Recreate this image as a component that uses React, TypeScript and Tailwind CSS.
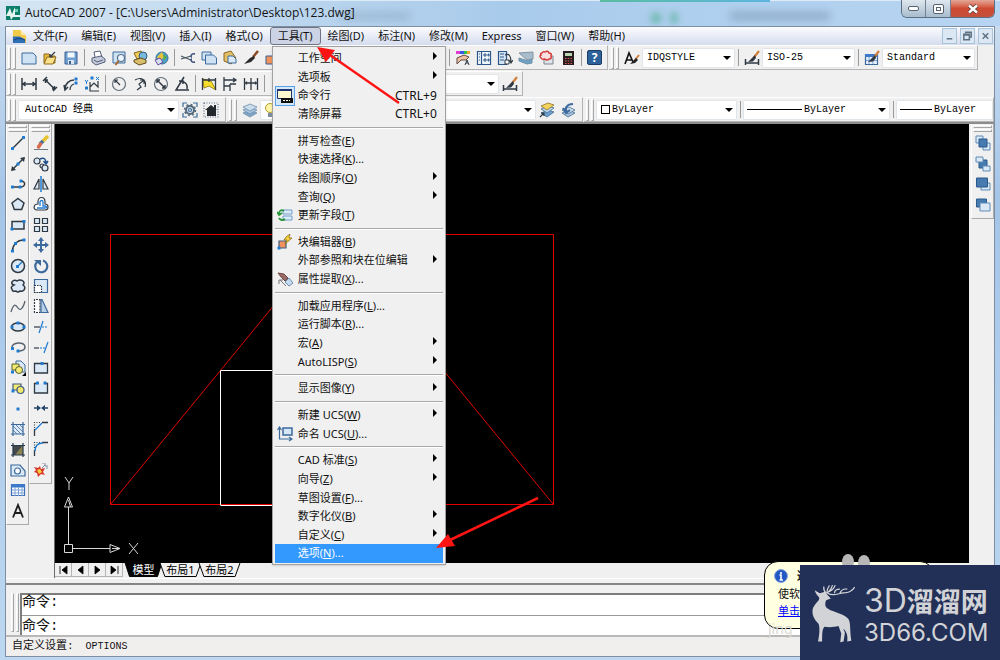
import React from 'react';

const ink = '#2f3943';
const blue = '#1f7bd0';
const steel = '#3d6a9c';
const pale = '#dbe8f5';

type Tool = { name: string; art: React.ReactNode };

const Dot = ({ x, y }: { x: number; y: number }) => (
  <rect x={x - 1.5} y={y - 1.5} width="3" height="3" rx="0.5" fill={blue} stroke="none" />
);

function Icon({ children, className = 'h-4 w-4' }: { children: React.ReactNode; className?: string }) {
  return (
    <svg viewBox="0 0 16 16" className={className} fill="none" stroke={ink} strokeWidth="1.2" aria-hidden="true">
      {children}
    </svg>
  );
}

const brush = (
  <>
    <path d="M15 1 9.500 8" stroke="#d0803a" strokeWidth="2.2" />
    <path d="M11 5 4 12l5-.5L12 8z" fill={ink} stroke="none" />
  </>
);

const fileTools: Tool[] = [
  { name: '新建', art: <path d="M1 3h11l3 3v8H1z" fill="#cfe2f4" stroke={steel} strokeWidth="1" /> },
  {
    name: '打开',
    art: (
      <>
        <path d="M2 13V4h5l1 2h5v7z" fill="#e9b83c" stroke="#8b6a1d" strokeWidth="1" />
        <path d="M2 14 5 7h9l-3 7z" fill="#fbe08a" stroke="#8b6a1d" strokeWidth="1" />
        <path d="m13 2-5 5m0-3v3h3" stroke={ink} strokeWidth="1.2" />
      </>
    ),
  },
  {
    name: '保存',
    art: (
      <>
        <path d="M2 2h12v12H2z" fill="#6e9fd2" stroke="#3a5f8f" strokeWidth="1" />
        <path d="M4.500 2.500h7v5h-7z" fill="#f4f8fc" stroke="none" />
        <path d="M5 10h6v4H5z" fill="#dbe6f2" stroke="none" />
        <path d="M6 11h2v3H6z" fill="#3a5f8f" stroke="none" />
      </>
    ),
  },
];

const printTools: Tool[] = [
  {
    name: '打印',
    art: (
      <>
        <path d="m5 7-1-5 6-1 2 6" fill="#fff" stroke="#55617a" strokeWidth="1" />
        <path d="m2 8 9-2 4 3v3l-9 3-4-3z" fill="#c3cada" stroke="#55617a" strokeWidth="1" />
        <path d="m4 10 3 2 6-2" stroke="#55617a" strokeWidth="1" />
      </>
    ),
  },
  {
    name: '打印预览',
    art: (
      <>
        <path d="M2 2h12v11H2z" fill="#cfe2f4" stroke={steel} strokeWidth="1" />
        <circle cx="10" cy="8" r="3.500" fill="#eef6fd" stroke="#56708c" />
        <path d="m7.500 11-3 4" stroke="#a86532" strokeWidth="2" />
      </>
    ),
  },
  {
    name: '发布',
    art: (
      <>
        <path d="m2 3 7-2 3 6-7 2z" fill="#f3ce55" stroke="#80631c" strokeWidth="1" />
        <circle cx="11" cy="6" r="4" fill="#7ab8dc" stroke="#315a82" strokeWidth="1" />
        <path d="m2 10 7-2 5 2v3l-7 2-5-3z" fill="#d9bd6b" stroke="#5e4c22" strokeWidth="1" />
      </>
    ),
  },
  {
    name: '三维 DWF',
    art: (
      <>
        <circle cx="9" cy="8" r="6" fill="#4aa3c9" stroke="#3b6c94" strokeWidth="1" />
        <path d="m9 2 2 5-4 4-3-4z" fill="#e8c33d" stroke="none" />
        <path d="m10 4 4 3-3 4z" fill="#58a84a" stroke="none" />
        <path d="m2 10 5-2 3 4-5 3z" fill="#d4def0" stroke="#6c4b9a" strokeWidth="1" />
      </>
    ),
  },
];

const clipTools: Tool[] = [
  {
    name: '剪切',
    art: (
      <>
        <path d="m1 6 10 4M1 9l10-3" stroke="#4c5660" />
        <path d="M15 4c-4-1-5 3-3 3M15 12c-4 1-5-3-3-3" stroke="#36507c" strokeWidth="1.500" />
      </>
    ),
  },
  {
    name: '复制',
    art: (
      <>
        <path d="M1 2h9v8H1z" fill="#cfe2f4" stroke={steel} strokeWidth="1" />
        <path d="M4.500 5h8l3 3v6h-11z" fill="#cfe2f4" stroke={steel} strokeWidth="1" />
      </>
    ),
  },
  {
    name: '粘贴',
    art: (
      <>
        <path d="m2 3 7-2 5 7-5 6-7-3z" fill="#e6bf62" stroke="#86682a" strokeWidth="1" />
        <path d="M6 6h5l3 3v4H6z" fill="#dbe8f5" stroke={steel} strokeWidth="1" />
      </>
    ),
  },
  {
    name: '特性匹配',
    art: (
      <>
        <path d="m15 1-5 6" stroke="#8c4a25" strokeWidth="2.500" />
        <path d="m11 6-4 2-6 6 7-2 4-4z" fill="#2b2b2b" stroke="none" />
      </>
    ),
  },
  {
    name: '块编辑器',
    art: <path d="M2 6h8v8H2z" fill="#f0935c" stroke="#3a5f8f" strokeWidth="1" />,
  },
];

const paletteTools: Tool[] = [
  {
    name: '特性',
    art: (
      <>
        <path d="M1 1h4v3H1z" fill="#e33ad0" stroke="none" />
        <path d="M5 1h4v3H5z" fill="#3b57e6" stroke="none" />
        <path d="M9 1h3v3H9z" fill="#2fc14c" stroke="none" />
        <path d="M12 1h3v3h-3z" fill="#f0a92b" stroke="none" />
        <path d="m2 8 7-3 5 2-3 3H6l-4 4z" fill="#efc1a0" stroke="#5d4a42" strokeWidth="1" />
        <path d="m10 15 2-5 2 5m-3-2h2" strokeWidth="1" />
      </>
    ),
  },
  {
    name: '设计中心',
    art: (
      <>
        <path d="M1.500 1.500h13v13h-13z" fill="#f2f7fc" stroke="#2d5689" />
        <path d="M5.500 2v12" stroke="#2d5689" />
        <path d="M3 4h1M3 7h1M3 10h1M8 4h2v2H8zM12 4h1v2h-1zM8 9h2v2H8zM12 9h1v2h-1z" stroke="#2d5689" strokeWidth="1" />
      </>
    ),
  },
  {
    name: '工具选项板',
    art: (
      <>
        <path d="M1.500 1.500h8v13h-8z" fill="#d4e3f3" stroke="#2d5689" />
        <path d="M3 4h4M3 7h4M3 10h4" stroke="#2d5689" />
        <path d="M8 5c4-2 6 1 6 7m-2-2 2 3 2-3" />
        <path d="M8 10h4v4H8z" fill="#fff" strokeWidth="1" />
      </>
    ),
  },
  {
    name: '图纸集',
    art: (
      <>
        <path d="m1 3 14-1v7l-6 1z" fill="#a9bccb" stroke="#8194a4" strokeWidth="1" />
        <path d="m1 8 9 3 4-2v4l-5 1-8-3z" fill="#6ca3c9" stroke="#7190a6" strokeWidth="1" />
      </>
    ),
  },
  {
    name: '标记集',
    art: (
      <>
        <path d="M5 6h9v8H5z" fill="#dfe4ea" stroke="#7c858f" strokeWidth="1" />
        <path
          d="M3 3q1-2 3-1 3-2 4 1 3 0 2 3 1 3-2 3-2 2-4 0-3 1-4-1-2-2 0-3-1-2 1-2z"
          fill="#fbe1e1"
          stroke="#d43a3a"
          strokeWidth="1.500"
        />
      </>
    ),
  },
  {
    name: '快速计算器',
    art: (
      <>
        <path d="M3 1h11v14H3z" fill="#2a1d20" stroke="none" />
        <path d="M5 3h7v3H5z" fill="#b8d8b4" stroke="none" />
        <path d="M5 8.500h7M5 11h7M5 13.500h7" stroke="#d65a5a" strokeDasharray="1.500 1.250" />
      </>
    ),
  },
];

const dimTools: Tool[] = [
  { name: '线性标注', art: <path d="M1 2v12M15 2v12M2 8h12M4.500 6 2 8l2.500 2M11.500 6 14 8l-2.500 2" strokeWidth="1.500" /> },
  { name: '对齐标注', art: <path d="m1 5 4-4M11 15l4-4M3.500 4l9 9M3.500 7V4H6M12.500 10v3H10" strokeWidth="1.500" /> },
  {
    name: '弧长标注',
    art: (
      <>
        <path d="M2 13c0-5 4-9 9-9M1 9l1 5 3-3" strokeWidth="1.500" />
        <path d="M7 14c0-3 1-5 4-6" />
        <Dot x={13} y={3} />
        <Dot x={13} y={7} />
      </>
    ),
  },
  {
    name: '坐标标注',
    art: (
      <>
        <path d="M6 6v9h9M6 11l4-4 4 4V5" />
        <path d="m1 4 1.500 2L4 4M2.500 6v2M12 1l3 3m0-3-3 3" stroke={blue} strokeWidth="1" />
        <Dot x={2.5} y={12} />
        <Dot x={8} y={2} />
      </>
    ),
  },
];

const radiusTools: Tool[] = [
  {
    name: '半径标注',
    art: (
      <>
        <circle cx="8" cy="8" r="6.500" stroke="#66707a" />
        <path d="M9 9 4 4m0 3V4h3" />
      </>
    ),
  },
  { name: '折弯标注', art: <path d="M3 4c7-4 12 1 10 7M5 14l4-3-2-3 5-4M8 4h4v4" /> },
  {
    name: '直径标注',
    art: (
      <>
        <circle cx="8" cy="8" r="6.500" stroke="#66707a" />
        <path d="m4 4 8 8M4 7V4h3M12 9v3H9" strokeWidth="1.500" />
      </>
    ),
  },
  { name: '角度标注', art: <path d="M10 1 2 14h13M7 5c5 1 7 4 6 8M5 5h4v3" strokeWidth="1.500" /> },
];

const quickDimTools: Tool[] = [
  {
    name: '快速标注',
    art: (
      <>
        <path d="m2 3 8 2 5 9-7-4-5 2z" fill="#f5de2c" stroke="#a48d17" strokeWidth="1" />
        <path d="M1.500 2v12M14.500 2v12M8 2v4M2 4h12" strokeWidth="1.300" />
      </>
    ),
  },
  { name: '基线标注', art: <path d="M2 1v14M2 4h12m-3-2 3 2-3 2M2 10h6M8 8v7M14 8H8" strokeWidth="1.300" /> },
  { name: '连续标注', art: <path d="M1.500 2v12M8 2v12M14.500 2v12M2 7h12M3.500 5.500v3M12.500 5.500v3" strokeWidth="1.300" /> },
];

const dimStyleArt = (
  <>
    <path d="M1.500 9v6M14.500 9v6M2 13h12" strokeWidth="1.500" />
    {brush}
  </>
);

const gearArt = (
  <>
    <path d="M1 5V1h4M11 1h4v4M15 11v4h-4M5 15H1v-4" stroke="#3c6c99" />
    <circle cx="8" cy="8" r="4" fill="#dbe4ec" stroke="#526778" strokeWidth="2" />
    <circle cx="8" cy="8" r="5.500" stroke="#526778" strokeWidth="1.500" strokeDasharray="2 2.300" />
    <circle cx="8" cy="8" r="1.500" stroke="#3c6c99" />
  </>
);

const homeArt = (
  <>
    <path d="M1 1h14v14H1z" stroke="#5c7183" strokeDasharray="1 1.500" />
    <path d="m8 3-6 5h2v6h9V8h1z" fill="#23282d" stroke="none" />
    <path d="M11 3h2v4h-2z" fill="#23282d" stroke="none" />
  </>
);

const layersArt = (
  <>
    <path d="m1 11 7-3 7 3-7 4z" fill="#7fa6c9" stroke="#6f8eac" strokeWidth="0.800" />
    <path d="m1 8 7-3 7 3-7 4z" fill="#a8c5df" stroke="#6f8eac" strokeWidth="0.800" />
    <path d="m1 5 7-3 7 3-7 4z" fill="#cbdeee" stroke="#6f8eac" strokeWidth="0.800" />
  </>
);

const layerCurrentArt = (
  <>
    <path d="m2 11 7-3 6 2-7 5z" fill="#6ba0cf" stroke="#44698f" strokeWidth="0.800" />
    <path d="m2 7 7-3 6 2-7 5z" fill="#b9d5ec" stroke="#44698f" strokeWidth="0.800" />
    <path d="m2 4 7-3 6 2-7 5z" fill="#f3d35c" stroke="#8d742a" strokeWidth="0.800" />
    <path d="m1 15 4-4m-3 0h3v3" />
  </>
);

const layerPrevArt = (
  <>
    <path d="m2 11 7-3 6 3-7 4z" fill="#a8c5df" stroke="#44698f" strokeWidth="0.800" />
    <path d="m2 8 7-3 6 3-7 4z" fill="#cbdeee" stroke="#44698f" strokeWidth="0.800" />
    <path d="M7 10c-3-4 0-8 6-8M3 6l3 5 4-3" stroke={steel} strokeWidth="2" />
  </>
);

const drawTools: Tool[] = [
  { name: '直线', art: <><path d="M3 13 13 3" strokeWidth="1.500" /><Dot x={2.5} y={13.5} /><Dot x={13.5} y={2.5} /></> },
  {
    name: '构造线',
    art: (
      <>
        <path d="M2 14 14 2" strokeWidth="1.500" />
        <path d="m1 15 1-5 4 4zM15 1l-1 5-4-4z" fill={ink} stroke="none" />
        <Dot x={8} y={8} />
      </>
    ),
  },
  { name: '多段线', art: <><path d="M2 11h8c6 0 6-6 1-6" strokeWidth="1.500" /><Dot x={2.5} y={11} /><Dot x={10} y={11} /><Dot x={11} y={5} /></> },
  { name: '正多边形', art: <path d="m8 2.500 6 4.500-2.300 6.500H4.300L2 7z" fill={pale} strokeWidth="1.500" /> },
  { name: '矩形', art: <><path d="M2 4.500h12v7.500H2z" fill={pale} strokeWidth="1.500" /><Dot x={14} y={4.5} /><Dot x={2} y={12} /></> },
  { name: '圆弧', art: <><path d="M2.500 14C2.500 8 7 3 14 3" strokeWidth="1.500" /><Dot x={2.5} y={14} /><Dot x={5.5} y={6.5} /><Dot x={14} y={3} /></> },
  {
    name: '圆',
    art: (
      <>
        <circle cx="8" cy="8" r="6.500" fill={pale} strokeWidth="1.500" />
        <path d="m8 8 4-4" stroke={blue} />
        <Dot x={7.5} y={8.5} />
      </>
    ),
  },
  {
    name: '修订云线',
    art: (
      <path
        d="M4 7Q1 6 2 4q2-3 5-1 3-2 6 0 2 2 0 4 3 2 1 5-2 2-4 1-2 2-4 0-4 1-4-2-2-2 2-4z"
        fill={pale}
        strokeWidth="1.500"
      />
    ),
  },
  { name: '样条曲线', art: <path d="M1 13C4 3 6 6 8 9s5 1 7-7" stroke="#59636d" strokeWidth="1.300" /> },
  {
    name: '椭圆',
    art: <><ellipse cx="8" cy="8" rx="6.500" ry="4" fill={pale} strokeWidth="1.500" /><Dot x={8} y={4} /><Dot x={2} y={8} /><Dot x={14} y={8} /></>,
  },
  { name: '椭圆弧', art: <><path d="M2 9c-1-6 13-7 13-1 0 3-3 4-7 4" stroke="#59636d" strokeWidth="1.500" /><Dot x={2.5} y={9.5} /><Dot x={8} y={12} /></> },
  {
    name: '插入块',
    art: (
      <>
        <path d="M6 1h5l4 4v7H6z" fill={pale} stroke={steel} strokeWidth="1" />
        <path d="M2 4h7v6H2z" fill="#f6ec74" stroke="#55602a" strokeWidth="1" />
        <circle cx="9" cy="10" r="3.500" fill="#f6ec74" stroke="#55602a" strokeWidth="1" />
        <Dot x={2.5} y={12} />
        <path d="M16 16h-4l4-4z" fill="#000" stroke="none" />
      </>
    ),
  },
  {
    name: '创建块',
    art: (
      <>
        <path d="M3 4h8v6H3z" fill="#f6ec74" stroke="#3d5a80" strokeWidth="1.200" />
        <circle cx="10.500" cy="10" r="3.500" fill="#f3e66a" stroke="#3d5a80" strokeWidth="1.200" />
        <Dot x={3} y={11} />
      </>
    ),
  },
  { name: '点', art: <Dot x={8} y={8} /> },
  {
    name: '图案填充',
    art: (
      <>
        <path d="M3 3h10v10H3z" fill={pale} stroke="none" />
        <path d="m3 9 4 4M3 5l8 8M5 3l8 8M9 3l4 4" stroke={steel} strokeWidth="0.800" />
        <path d="M3 1v14M13 1v14M1 3.500h14M1 13h14" stroke={steel} />
      </>
    ),
  },
  {
    name: '渐变色',
    art: (
      <>
        <path d="M3 3h10v10H3z" fill="#45484a" stroke="none" />
        <path d="m13 3-8 10h8z" fill="#8c8552" stroke="none" />
        <path d="M3 1v14M13 1v14M1 3.500h14M1 13h14" stroke="#25384d" />
      </>
    ),
  },
  {
    name: '面域',
    art: (
      <>
        <path d="M1 3h9l5 6v5H1z" fill={pale} stroke={steel} />
        <circle cx="7.500" cy="9" r="3" fill="#fff" stroke={steel} />
      </>
    ),
  },
  {
    name: '表格',
    art: (
      <>
        <path d="M1.500 2.500h13v11h-13z" fill="#fff" stroke="#3f6fb5" />
        <path d="M1 2h14v3.500H1z" fill="#3d79c9" stroke="none" />
        <path d="M5 5v9M8.500 5v9M12 5v9M2 8h12M2 11h12" stroke="#7ea3d6" strokeWidth="1" />
      </>
    ),
  },
  { name: '多行文字', art: <path d="M3 14.500 8 2l5 12.500M5 10h6" stroke="#1d1d1d" strokeWidth="1.800" /> },
];

const modifyTools: Tool[] = [
  {
    name: '删除',
    art: (
      <>
        <path d="M1 14.500h14" stroke="#717b85" strokeWidth="1" />
        <path d="m15 1-6 6" stroke="#e5c22e" strokeWidth="3.500" />
        <path d="m10 6-3 3" stroke="#3f6fa5" strokeWidth="3.500" />
        <path d="m7.500 9-2 3" stroke="#d86a4e" strokeWidth="3.500" strokeLinecap="round" />
      </>
    ),
  },
  {
    name: '复制',
    art: (
      <>
        <circle cx="4" cy="5" r="3" fill={pale} />
        <circle cx="9" cy="10" r="2" fill={pale} />
        <circle cx="12" cy="12" r="3" fill={pale} />
        <path d="M7 3c4-2 6 0 6 4m-2.500-2L13 8l2-3" stroke="#1d4f8e" strokeWidth="1.500" />
      </>
    ),
  },
  { name: '镜像', art: <><path d="M6 3v10H1zM10 3v10h5z" fill={pale} /><path d="M8 0v16" stroke={blue} strokeWidth="1.500" /></> },
  {
    name: '偏移',
    art: (
      <>
        <path d="M5 8V6c0-6 7-6 7 0v2c4 0 4 6 0 6H4c-4 0-4-6 1-6z" fill="#fff" />
        <path d="M7 10V6c0-2 3-2 3 0v4h2c2 0 2 2 0 2H4" stroke={blue} strokeWidth="1.300" />
      </>
    ),
  },
  { name: '阵列', art: <path d="M1.500 1.500h5v5h-5zM9.500 1.500h5v5h-5zM1.500 9.500h5v5h-5zM9.500 9.500h5v5h-5z" fill={pale} /> },
  {
    name: '移动',
    art: (
      <>
        <path d="M8 3v10M3 8h10" stroke={steel} strokeWidth="2" />
        <path d="m8 0 3 4H5zM8 16l3-4H5zM0 8l4-3v6zM16 8l-4-3v6z" fill={steel} stroke="none" />
      </>
    ),
  },
  { name: '旋转', art: <><path d="M10 2.500A6 6 0 1 1 4 4" stroke={steel} strokeWidth="2.200" /><path d="M1 2h7v6z" fill={steel} stroke="none" /></> },
  {
    name: '缩放',
    art: (
      <>
        <path d="M1.500 1.500h13v13h-13z" fill={pale} stroke={steel} />
        <path d="M1.500 7.500h7v7h-7z" fill="#fff" strokeDasharray="1.500 1" />
      </>
    ),
  },
  { name: '拉伸', art: <><path d="M7 1.500v13H1.500v-13z" fill="#fff" strokeDasharray="2 1" /><path d="M8 1.500h1l6 13H8z" fill="#b9cfe6" stroke={steel} /></> },
  { name: '修剪', art: <><path d="M1 8h6" /><path d="M9 8h6" stroke={blue} strokeDasharray="2 1" /><path d="M10 2 6 14" stroke={blue} /></> },
  { name: '延伸', art: <><path d="M1 9h5" /><path d="M7 9h5" stroke={blue} strokeDasharray="2 1" /><path d="M15 3 11 14" stroke={blue} /></> },
  { name: '打断于点', art: <><path d="M1.500 3.500h13v9.500h-13z" fill={pale} strokeWidth="1.300" /><Dot x={9} y={3.5} /></> },
  { name: '打断', art: <><path d="M4 3.500H1.500V13h13V3.500H12" fill={pale} strokeWidth="1.300" /><Dot x={4.5} y={3} /><Dot x={12} y={3} /></> },
  {
    name: '合并',
    art: (
      <>
        <path d="M1 8h4M15 8h-4" stroke="#234569" strokeWidth="1.500" />
        <path d="m4 5 4 3-4 3zM12 5 8 8l4 3z" fill="#234569" stroke="none" />
      </>
    ),
  },
  { name: '倒角', art: <><path d="M1.500 15V8M9 1.500h6" strokeWidth="1.300" /><path d="M1.500 7V1.500H8" strokeDasharray="1 1.500" /><path d="M2 9 9 2" stroke={blue} /></> },
  { name: '圆角', art: <><path d="M1.500 15V9M9 1.500h6" strokeWidth="1.300" /><path d="M1.500 7V1.500H8" strokeDasharray="1 1.500" /><path d="M2 10c0-5 3-8 8-8" stroke={blue} strokeWidth="1.600" /></> },
  {
    name: '分解',
    art: (
      <>
        <path d="m1 5 4 1 2-2 1 3 4-1-2 4 2 3-4-1-3 3-1-4-3-1 2-2z" fill="#d8352a" stroke="none" />
        <path d="m4 8 3-1 2 3-3 2z" fill="#f6d13b" stroke="none" />
        <path d="m9 6 3-3M12 1v3h3M13 6h2M10 1v1" stroke="#7d8ea0" strokeWidth="1" />
      </>
    ),
  },
];

const orderTools: Tool[] = [
  { name: '前置', art: <><path d="M1 1h7v7H1z" fill={pale} stroke="#5f8bb5" strokeWidth="1" /><path d="M8 8h7v7H8z" fill={pale} stroke="#5f8bb5" strokeWidth="1" /><path d="M4 4h8v8H4z" fill="#477bb0" stroke="#2b5b8e" strokeWidth="1" /></> },
  { name: '后置', art: <><path d="M4 4h8v8H4z" fill="#477bb0" stroke="#2b5b8e" strokeWidth="1" /><path d="M1 1h7v5H1zM8 10h7v5H8z" fill={pale} stroke="#5f8bb5" strokeWidth="1" /></> },
  { name: '置于对象之上', art: <><path d="M6 7h9v7H6z" fill={pale} stroke="#5f8bb5" strokeWidth="1" /><path d="M1.500 2h11v9h-11z" fill="#477bb0" stroke="#2b5b8e" strokeWidth="1" /></> },
  { name: '置于对象之下', art: <><path d="M1.500 2h10v8h-10z" fill="#477bb0" stroke="#2b5b8e" strokeWidth="1" /><path d="M5 6h10v8H5z" fill={pale} stroke="#5f8bb5" strokeWidth="1" /></> },
];

const fieldArt = (
  <>
    <path d="M6 3h9v4H6zM6 9h9v4H6z" fill="#dcebf8" stroke="#6f9fca" strokeWidth="1" />
    <path d="M7 4C4 2 2 4 2 7M0 5l2 3 3-2M2 11c1 2 4 3 6 1" stroke="#28963a" strokeWidth="1.800" />
  </>
);
const blockEditArt = (
  <>
    <path d="M2 7h7v7H2z" fill="#f3915e" stroke="#3e5c80" />
    <path d="m9 3 4-3-1 4 3 0-7 6 2-4H7z" fill="#f7d33b" stroke="#8b6b16" strokeWidth="0.800" />
    <Dot x={2} y={14} />
  </>
);
const extractArt = (
  <>
    <path d="m1 2 6 1 4 4-3 3-4-4z" fill="#9a6a66" stroke="#6c4946" strokeWidth="1" />
    <path d="m8 11 4-4 4 5-4 3z" fill="#c5dcf0" stroke="#6f8fac" strokeWidth="1" />
    <path d="m3 9 6 6M2 13V9h4" stroke="#777" strokeWidth="1" />
  </>
);
const ucsArt = (
  <>
    <path d="M6 2h9v7H6z" fill="#d5e6f6" stroke={steel} strokeWidth="1.500" />
    <path d="M2.500 1v12H15M0.500 4l2-3 2 3M12 11l3 2-3 2" stroke={steel} />
  </>
);
const commandArt = (
  <>
    <path d="M0.500 1.500h14v9h-14z" fill="#fffbd0" stroke="#1f3570" strokeWidth="1" />
    <path d="M0 1h15v2H0z" fill="#1f3570" stroke="none" />
    <path d="M4 10h12v5H4z" fill="#111" stroke="none" />
    <path d="M6 12.500h7" stroke="#fff" strokeDasharray="2 1" strokeWidth="1" />
  </>
);

function Tools({ items }: { items: Tool[] }) {
  return (
    <>
      {items.map(({ name, art }) => (
        <button key={name} aria-label={name} title={name} className="flex w-[21px] shrink-0 items-center justify-center">
          <Icon>{art}</Icon>
        </button>
      ))}
    </>
  );
}

const Divider = () => (
  <span className="flex w-[6px] shrink-0 justify-center">
    <span className="h-[17px] w-px bg-[#9a9a9a]" />
  </span>
);

const Grip = () => (
  <span className="mx-[2px] flex w-2 shrink-0 gap-[2px]">
    <span className="h-[22px] w-[3px] border border-t-white border-r-[#a5a5a5] border-b-[#a5a5a5] border-l-white" />
    <span className="h-[22px] w-[3px] border border-t-white border-r-[#a5a5a5] border-b-[#a5a5a5] border-l-white" />
  </span>
);

function Bar({ children, className = '' }: { children: React.ReactNode; className?: string }) {
  return (
    <div className={`flex h-[25px] items-center border-t border-r border-b border-[#b4b4b4] border-t-white ${className}`}>
      {children}
    </div>
  );
}

function Combo({
  label,
  value,
  width,
  pad = 'pr-4 pl-[4px]',
  arrow = true,
  children,
}: {
  label: string;
  value: string;
  width: string;
  pad?: string;
  arrow?: boolean;
  children?: React.ReactNode;
}) {
  return (
    <span className={`relative flex h-5 items-center ${width}`}>
      <select
        aria-label={label}
        defaultValue={value}
        className={`h-5 w-full appearance-none rounded-xs border border-[#e0e5ea] bg-white font-["Liberation_Mono","Noto_Sans_CJK_SC",monospace] text-[10px] text-black ${pad}`}
      >
        <option>{value}</option>
      </select>
      {children}
      {arrow && (
        <svg viewBox="0 0 8 4" className="pointer-events-none absolute right-1 h-1 w-2">
          <path d="M0 0h8L4 4z" fill="#000" />
        </svg>
      )}
    </span>
  );
}

const menuBar = ['文件(F)', '编辑(E)', '视图(V)', '插入(I)', '格式(O)', '工具(T)', '绘图(D)', '标注(N)', '修改(M)', 'Express', '窗口(W)', '帮助(H)'];

type Entry = { text: string; hot?: string; tail?: string; sub?: boolean; keys?: string; art?: React.ReactNode; on?: boolean };

const toolsMenu: Entry[][] = [
  [
    { text: '工作空间', sub: true },
    { text: '选项板', sub: true },
    { text: '命令行', keys: 'CTRL+9', art: commandArt, on: true },
    { text: '清除屏幕', keys: 'CTRL+0' },
  ],
  [
    { text: '拼写检查', hot: 'E' },
    { text: '快速选择', hot: 'K', tail: '...' },
    { text: '绘图顺序', hot: 'O', sub: true },
    { text: '查询', hot: 'Q', sub: true },
    { text: '更新字段', hot: 'T', art: fieldArt },
  ],
  [
    { text: '块编辑器', hot: 'B', art: blockEditArt },
    { text: '外部参照和块在位编辑', sub: true },
    { text: '属性提取', hot: 'X', tail: '...', art: extractArt },
  ],
  [
    { text: '加载应用程序', hot: 'L', tail: '...' },
    { text: '运行脚本', hot: 'R', tail: '...' },
    { text: '宏', hot: 'A', sub: true },
    { text: 'AutoLISP', hot: 'S', sub: true },
  ],
  [{ text: '显示图像', hot: 'Y', sub: true }],
  [
    { text: '新建 UCS', hot: 'W', sub: true },
    { text: '命名 UCS', hot: 'U', tail: '...', art: ucsArt },
  ],
  [
    { text: 'CAD 标准', hot: 'S', sub: true },
    { text: '向导', hot: 'Z', sub: true },
    { text: '草图设置', hot: 'F', tail: '...' },
    { text: '数字化仪', hot: 'B', sub: true },
    { text: '自定义', hot: 'C', sub: true },
    { text: '选项', hot: 'N', tail: '...' },
  ],
];

function ToolsMenu() {
  return (
    <div
      role="menu"
      className="absolute top-[18px] left-px z-20 flex h-[519px] w-[174px] flex-col border border-[#a0a0a0] bg-[#f0f0f0] px-[2px] pt-[2px] pb-px shadow-sm"
    >
      {toolsMenu.map((group, i) => (
        <React.Fragment key={i}>
          {i > 0 && (
            <div role="separator" className="flex h-2 items-center">
              <span className="h-[2px] w-full border-t border-b border-t-[#a8a8a8] border-b-white" />
            </div>
          )}
          {group.map((item) => (
            <button
              key={item.text}
              role="menuitem"
              className={`flex min-h-0 flex-1 items-center pr-[6px] text-left ${item.text === '选项' ? 'bg-[#3399ff] text-white' : ''}`}
            >
              <span className="flex w-[23px] shrink-0 items-center">
                {item.art && (
                  <span className={item.on ? 'border border-[#5aa0e8] bg-[#d5e7fa] p-px' : 'pl-[2px]'}>
                    <Icon>{item.art}</Icon>
                  </span>
                )}
              </span>
              <span className="flex-1 whitespace-nowrap">
                {item.text}
                {item.hot && (
                  <>
                    (<u>{item.hot}</u>)
                  </>
                )}
                {item.tail}
              </span>
              {item.keys && <span className="text-[12px]">{item.keys}</span>}
              {item.sub && (
                <svg viewBox="0 0 4 8" className="mb-1 h-2 w-1">
                  <path d="M0 0v8l4-4z" fill="#000" />
                </svg>
              )}
            </button>
          ))}
        </React.Fragment>
      ))}
    </div>
  );
}

function TitleBar() {
  return (
    <header className="relative flex h-[26px] shrink-0 items-center overflow-hidden bg-linear-to-r from-[#d5e5f2] via-[#a9cbeb] to-[#b7d5f2] pl-[6px]">
      <div className="absolute top-0 left-0 h-px w-full bg-[#dcebf7]" />
      <div className="absolute top-0 left-[60%] h-[2px] w-[17%] bg-linear-to-r from-[#58bda0] to-[#5db5df]" />
      <div className="absolute top-3 left-[65%] h-3 w-3 rounded-full bg-[#55b195]/60 blur-[3px]" />
      <div className="absolute top-3 left-[67%] h-3 w-2 rounded-full bg-[#55b195]/60 blur-[3px]" />
      <div className="absolute top-3 left-[73%] h-2 w-[100px] bg-[#7692b0]/60 blur-[4px]" />
      <div className="absolute top-3 left-[34%] h-2 w-[70px] bg-[#7692b0]/40 blur-[4px]" />
      <svg viewBox="0 0 14 14" className="relative h-[14px] w-[14px]" aria-hidden="true">
        <path d="M0 0h14v14H0z" fill="#0c7d68" />
        <path d="M0 10 4 2l2 6 3-7v8h5v2H7l-2 3-1-4z" fill="#e4f5ef" />
        <path d="M9 3h3v3H9z" fill="#6fcdb5" />
      </svg>
      <h1 className='relative ml-[5px] font-["Open_Sans",sans-serif] text-[12px] leading-[18px] whitespace-nowrap text-[#141414]'>
        AutoCAD 2007 - [C:\Users\Administrator\Desktop\123.dwg]
      </h1>
      <div className="relative mr-[5px] ml-auto flex h-[18px] self-start overflow-hidden rounded-b-md border border-t-0 border-[#5d6f82]">
        <button aria-label="最小化" className="flex w-6 items-center justify-center border-r border-[#6f8193] bg-linear-to-b from-[#dfe7ee] to-[#a8bccd]">
          <span className="h-[5px] w-[11px] rounded-xs border border-[#566270] bg-white" />
        </button>
        <button aria-label="还原" className="flex w-[25px] items-center justify-center border-r border-[#6f8193] bg-linear-to-b from-[#dfe7ee] to-[#a8bccd]">
          <span className="flex h-[10px] w-[11px] items-center justify-center rounded-xs border border-[#566270] bg-white">
            <span className="h-1 w-[5px] border border-[#566270]" />
          </span>
        </button>
        <button aria-label="关闭" className="flex w-[43px] items-center justify-center bg-linear-to-b from-[#e3a797] via-[#cf4a32] via-50% to-[#c4503c]">
          <svg viewBox="0 0 12 10" className="h-[10px] w-3">
            <path d="m2 1.500 8 7m0-7-8 7" stroke="#5d3a3a" strokeWidth="4" />
            <path d="m2 1.500 8 7m0-7-8 7" stroke="#fff" strokeWidth="2.400" />
          </svg>
        </button>
      </div>
    </header>
  );
}

function MenuBar() {
  return (
    <nav className="flex h-[19px] shrink-0 items-center border-t border-[#7f8fa3] bg-linear-to-b from-[#fbfcfe] to-[#d5dcee] pr-px">
      <svg viewBox="0 0 16 16" className="ml-[6px] h-[15px] w-[15px]" aria-hidden="true">
        <path d="M1 1h8l6 6v8H1z" fill="#f3cb4b" />
        <path d="M1 8h7l6 3v4H1z" fill="#2f6fb4" />
        <path d="m9 1 1 5 5 1z" fill="#fbecb0" />
        <path d="M2 12c4-3 8-2 12 0" stroke="#123d73" fill="none" />
      </svg>
      <div className="flex gap-[2px]">
        {menuBar.map((name) => {
          const open = name === '工具(T)';
          return (
            <div key={name} className="relative flex">
              <button
                aria-haspopup="menu"
                aria-expanded={open}
                className={`h-4 rounded-xs leading-4 whitespace-nowrap ${open ? 'bg-[#ccd3e4] px-[7px] outline outline-[#6f7482]' : 'px-[6px]'}`}
              >
                {name}
              </button>
              {open && <ToolsMenu />}
            </div>
          );
        })}
      </div>
      <div className="ml-auto flex gap-[3px]">
        {[
          { name: '最小化图形', d: 'M4 10h6' },
          { name: '还原图形', d: 'M5 4V3h6v5H9M3 5h6v6H3zM3 6h6' },
          { name: '关闭图形', d: 'm4 4 6 6m0-6-6 6' },
        ].map(({ name, d }) => (
          <button key={name} aria-label={name} className="h-4 w-[15px] border border-[#a9c3da] bg-[#dbe8f4]">
            <svg viewBox="0 0 14 14" className="h-[14px] w-[13px]" fill="none" stroke="#5f7180" strokeWidth="1.600">
              <path d={d} />
            </svg>
          </button>
        ))}
      </div>
    </nav>
  );
}

function Toolbars() {
  return (
    <div className="flex shrink-0 flex-col gap-px border-b-2 border-[#8d8d8d] whitespace-nowrap">
      <div className="flex gap-px">
        <Bar className="pr-[2px]">
          <div className="flex w-[440px] shrink-0 items-center">
            <Grip />
            <Tools items={fileTools} />
            <Divider />
            <Tools items={printTools} />
            <Divider />
            <Tools items={clipTools} />
          </div>
          <Divider />
          <Tools items={paletteTools} />
          <Divider />
          <button aria-label="帮助" className="flex w-[21px] shrink-0 items-center justify-center">
            <span className="h-[15px] w-[15px] rounded-xs border border-[#1c3e66] bg-[#2c6199] text-[12px] leading-[13px] font-bold text-white">
              ?
            </span>
          </button>
        </Bar>
        <Bar className="pr-[2px]">
          <Grip />
          <button aria-label="文字样式" className="flex w-[21px] shrink-0 justify-center">
            <Icon>
              <path d="M1 14 5 3l4 9M3 10h5" stroke="#111" strokeWidth="1.600" />
              <path d="m15 5-4 5" stroke="#d0803a" strokeWidth="2" />
              <path d="m12 8-6 6 5-1 3-3z" fill="#222" stroke="none" />
            </Icon>
          </button>
          <Combo label="文字样式" value="IDQSTYLE" width="w-[93px]" />
          <Divider />
          <button aria-label="标注样式" className="flex w-[21px] shrink-0 justify-center">
            <Icon>{dimStyleArt}</Icon>
          </button>
          <Combo label="标注样式" value="ISO-25" width="w-[93px]" />
          <Divider />
          <button aria-label="表格样式" className="flex w-[21px] shrink-0 justify-center">
            <Icon>
              <path d="M1.500 4.500h12v10h-12z" fill="#e8f1fb" stroke={steel} />
              <path d="M1 4h13v3H1z" fill="#3d79c9" stroke="none" />
              <path d="M5 7v7M9 7v7M2 10.500h11" stroke="#7ea3d6" strokeWidth="1" />
              {brush}
            </Icon>
          </button>
          <Combo label="表格样式" value="Standard" width="w-[93px]" />
        </Bar>
      </div>
      <div className="flex">
        <Bar className="pr-[2px]">
          <div className="flex w-[360px] shrink-0 items-center">
            <Grip />
            <Tools items={dimTools} />
            <Divider />
            <Tools items={radiusTools} />
            <Divider />
            <Tools items={quickDimTools} />
            <Divider />
          </div>
          <Combo label="当前标注样式" value="" width="w-[133px]" />
          <button aria-label="标注样式管理器" className="flex w-[21px] shrink-0 justify-center">
            <Icon>{dimStyleArt}</Icon>
          </button>
        </Bar>
      </div>
      <div className="flex gap-px">
        <Bar className="pr-[4px]">
          <Grip />
          <Combo label="工作空间" value="AutoCAD 经典" width="w-[161px]" pad="pl-[6px]" />
          <Tools items={[{ name: '工作空间设置', art: gearArt }, { name: '我的工作空间', art: homeArt }]} />
        </Bar>
        <Bar className="pr-[4px]">
          <Grip />
          <Tools items={[{ name: '图层特性', art: layersArt }]} />
          <Combo label="图层" value="" width="w-[276px]">
            <svg viewBox="0 0 16 16" className="pointer-events-none absolute left-[2px] h-4 w-4">
              <circle cx="8" cy="6" r="4.500" fill="#fff6a8" stroke="#b29b2c" />
              <path d="M6 11h4v4H6z" fill="#7e8fa5" />
            </svg>
          </Combo>
          <Tools items={[{ name: '置为当前图层', art: layerCurrentArt }, { name: '上一个图层', art: layerPrevArt }]} />
        </Bar>
        <Bar className="min-w-0 flex-1 overflow-hidden">
          <Grip />
          <Combo label="颜色" value="ByLayer" width="w-[141px] shrink-0" pad="pl-[15px]">
            <span className="pointer-events-none absolute left-[5px] h-[9px] w-[9px] border border-black bg-white" />
          </Combo>
          <Divider />
          <Combo label="线型" value="ByLayer" width="w-[147px] shrink-0" pad="pl-[60px]">
            <span className="pointer-events-none absolute left-1 h-px w-[55px] bg-black" />
          </Combo>
          <Divider />
          <Combo label="线宽" value="ByLayer" width="min-w-0 flex-1" pad="pl-[37px]" arrow={false}>
            <span className="pointer-events-none absolute left-1 h-px w-[32px] bg-black" />
          </Combo>
        </Bar>
      </div>
    </div>
  );
}

function SideBar({ label, items, height }: { label: string; items: Tool[]; height: string }) {
  return (
    <div
      role="toolbar"
      aria-label={label}
      className={`flex w-[23px] shrink-0 flex-col self-start border-r border-b border-l border-[#a9a9a9] border-l-white pb-[3px] ${height}`}
    >
      <div className="flex h-[9px] shrink-0 flex-col justify-center gap-px px-px">
        <span className="h-[3px] border border-t-white border-r-[#a5a5a5] border-b-[#a5a5a5] border-l-white" />
        <span className="h-[3px] border border-t-white border-r-[#a5a5a5] border-b-[#a5a5a5] border-l-white" />
      </div>
      {items.map(({ name, art }) => (
        <button key={name} aria-label={name} title={name} className="flex min-h-0 flex-1 items-center justify-center">
          <Icon>{art}</Icon>
        </button>
      ))}
    </div>
  );
}

function Drawing() {
  return (
    <svg className="min-h-0 w-full flex-1 bg-black" fill="none" aria-label="模型空间">
      <g stroke="#e00000">
        <path d="M55.500 110.500h443v270h-443z" />
        <path d="M55.500 380.500 277 110.500l221.500 270" />
      </g>
      <path d="M165.500 381V246.500h216V381M165.500 381.500h216" stroke="#fff" />
      <g stroke="#d8d8d8">
        <path d="M9.500 420.500h8v8h-8zM13.500 420V383M18 424.500h37" />
        <path d="m13.500 373 4 10h-8zM65 424.500l-10-4v8z" />
        <path d="m13.500 376 2 7M57 424.500h7" />
        <path d="m10 353 4 6 4-6M14 359v7M74 419l9 11M83 419l-9 11" />
      </g>
    </svg>
  );
}

function LayoutTabs() {
  return (
    <div className="flex h-[15px] shrink-0 bg-[#f0f0f0]">
      {[
        { name: '第一个', d: 'M3 1v8M10 1v8L5 5z' },
        { name: '上一个', d: 'M9 1v8L4 5z' },
        { name: '下一个', d: 'M4 1v8l5-4z' },
        { name: '最后一个', d: 'M10 1v8M3 1v8l5-4z' },
      ].map(({ name, d }) => (
        <button key={name} aria-label={name} className="flex h-[14px] w-[17px] items-center justify-center border-r border-b border-[#b5b5b5]">
          <svg viewBox="0 0 13 10" className="h-[10px] w-[13px]" fill="#000" stroke="#000" strokeWidth="0.800">
            <path d={d} />
          </svg>
        </button>
      ))}
      <div role="tablist" className="ml-[3px] flex">
        {['模型', '布局1', '布局2'].map((name, i) => (
          <button
            key={name}
            role="tab"
            aria-selected={i === 0}
            className={`relative flex h-[14px] items-center justify-center text-[11px] leading-[14px] ${i === 0 ? 'w-[35px] text-white' : 'w-[39px] text-black'}`}
          >
            <svg viewBox="0 0 40 14" preserveAspectRatio="none" className="absolute inset-0 h-[14px] w-full overflow-visible">
              <path d="M-1 0 4 13.500h32L41 0" fill={i === 0 ? '#000' : '#f0f0f0'} stroke="#000" />
            </svg>
            <span className="relative">{name}</span>
          </button>
        ))}
      </div>
    </div>
  );
}

function CommandPane() {
  return (
    <section className="flex shrink-0 border-t-2 border-t-[#858585] pt-2">
      <div className="mr-px ml-[5px] flex w-2 gap-[2px]">
        <span className="h-[39px] w-[3px] border border-t-white border-r-[#a5a5a5] border-b-[#a5a5a5] border-l-white" />
        <span className="h-[39px] w-[3px] border border-t-white border-r-[#a5a5a5] border-b-[#a5a5a5] border-l-white" />
      </div>
      <div className='flex-1 border-t-2 border-l-2 border-[#7d7d7d] bg-white font-["Liberation_Mono","Noto_Sans_CJK_SC",monospace] text-[14px]'>
        <p className="h-[20px] leading-[15px]">命令:</p>
        <label className="flex h-[20px] items-center border-t border-[#9a9a9a]">
          <span className="leading-[18px]">命令:</span>
          <input aria-label="命令行输入" className="min-w-0 flex-1 outline-none" />
        </label>
      </div>
    </section>
  );
}

function Balloon() {
  return (
    <aside className="absolute right-[66px] bottom-[31px] z-10 h-[68px] w-[170px] rounded-[14px] border border-black bg-[#ffffe1] pt-[6px] pl-[9px] text-[11px]">
      <div className="flex items-center gap-[9px] leading-[16px] font-bold">
        <svg viewBox="0 0 14 14" className="h-[14px] w-[14px]">
          <circle cx="7" cy="7" r="6.500" fill="#2458c4" stroke="#8ea8d8" />
          <path d="M7 3v2M5.500 6H7v5M5.500 11h3.500" stroke="#fff" strokeWidth="1.600" fill="none" />
        </svg>
        <span>通</span>
      </div>
      <p className="pl-1 leading-[20px]">使软</p>
      <a href="#options" className="block pl-1 leading-[14px] text-[#0000ff] underline">
        单击
      </a>
      <span className="absolute -bottom-[9px] left-[3px] text-[14px] leading-[16px] text-[#d9d9d2]">jing</span>
      <svg viewBox="0 0 30 16" className="absolute -top-[8px] left-[76px] h-4 w-[30px]">
        <ellipse cx="7" cy="8" rx="6" ry="8" fill="#b7b7b7" />
        <ellipse cx="23" cy="9" rx="6" ry="8" fill="#b7b7b7" />
      </svg>
    </aside>
  );
}

function Brand() {
  return (
    <div className="absolute right-0 bottom-0 z-30 flex h-[95px] w-[200px] items-center gap-2 bg-[#223057] pl-[11px] text-[#d2d3d6]">
      <svg viewBox="34 54 134 178" className="h-[60px] w-[45px] shrink-0" fill="currentColor" aria-hidden="true">
        <path d="m45 75 15 9 16-4 8 10 9 10-14 5c-3 8-4 14 0 21 12 14 50 16 66 34 8 12 4 32 9 66l-12 2c2-18-2-30-12-38l5 12-4 26-10 2 3-26-8-22c-14 4-32 4-42 2-8 8-6 24-7 44H55c4-22 6-38 2-52-15-16-22-31-17-48 7-16 22-22 18-32-5-6-11-12-13-21z" />
        <path
          d="M79 84c-6-6-8-10-7-20M81 85c0-10 2-16 8-24M82 84c8-8 14-12 16-24M88 80c10-6 16-10 18-20M84 84c14 10 30 2 40 0 14-2 30 0 40-18M104 84c0-8 8-12 16-12M120 84c4-10 12-14 22-12"
          fill="none"
          stroke="currentColor"
          strokeWidth="3.500"
        />
      </svg>
      <div>
        <p className="flex items-center whitespace-nowrap">
          <span className='font-["Inter",sans-serif] text-[32px] leading-[40px]'>3D</span>
          <span className='font-["Noto_Sans_CJK_SC",sans-serif] text-[27px] leading-[40px] font-bold'>溜溜网</span>
        </p>
        <p className='font-["Inter",sans-serif] text-[24px] leading-[24px]'>3D66.COM</p>
      </div>
    </div>
  );
}

// Callout arrows laid over the open menu
function Callouts() {
  return (
    <svg className="pointer-events-none absolute inset-0 z-40 h-full w-full" fill="#ff1414" stroke="#ff1414">
      <path d="M399 103 330 55" strokeWidth="2.500" />
      <path d="m317 47 18 3-9 12z" stroke="none" />
      <path d="m538 498-90 43" strokeWidth="2.500" />
      <path d="m436 548 12-14 7 12z" stroke="none" />
    </svg>
  );
}

export default function App() {
  return (
    <div className='relative flex h-screen min-h-[640px] w-full flex-col overflow-hidden bg-linear-to-b from-[#cfe0f0] via-[#a5c5e8] via-30% to-[#bdd7f0] font-["Noto_Sans","Noto_Sans_CJK_SC",sans-serif] text-[11px] text-[#111]'>
      <TitleBar />
      <main className="mx-[5px] mb-[3px] flex min-h-0 flex-1 flex-col border-x border-b border-[#7f8fa3] bg-[#f0f0f0]">
        <MenuBar />
        <Toolbars />
        <div className="flex min-h-0 flex-1">
          <SideBar label="绘图" items={drawTools} height="h-[401px]" />
          <SideBar label="修改" items={modifyTools} height="h-[360px]" />
          <div className="ml-[2px] flex min-w-0 flex-1 flex-col border-l border-[#6d6d6d]">
            <Drawing />
            <LayoutTabs />
          </div>
          <div className="ml-[2px] w-[23px] shrink-0">
            <SideBar label="绘图次序" items={orderTools} height="h-[95px]" />
          </div>
        </div>
        <div className="h-[5px] shrink-0 border-t border-white" />
        <CommandPane />
        <footer className='flex h-[21px] shrink-0 items-center gap-3 border-t-2 border-[#b9b9b9] bg-[#f1eeee] pl-[6px] font-["Liberation_Mono","Noto_Sans_CJK_SC",monospace]'>
          <span>自定义设置:</span>
          <span className="text-[10px]">OPTIONS</span>
        </footer>
      </main>
      <Balloon />
      <Brand />
      <Callouts />
    </div>
  );
}
